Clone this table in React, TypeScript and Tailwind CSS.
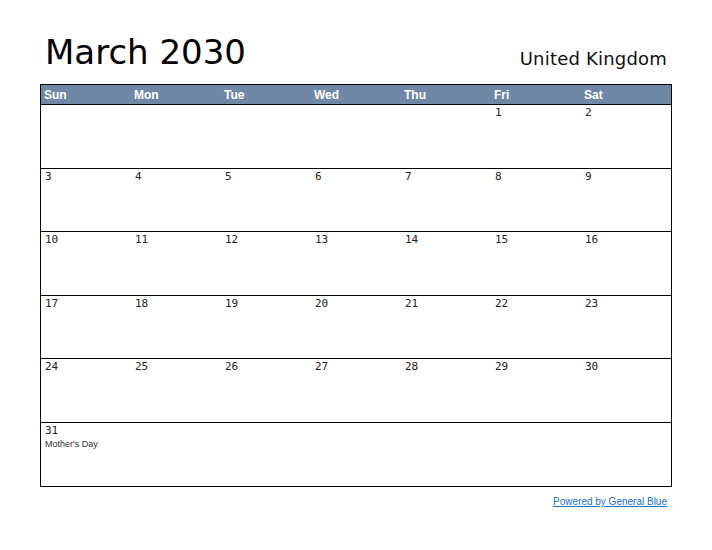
import React from 'react';

const days = ['Sun', 'Mon', 'Tue', 'Wed', 'Thu', 'Fri', 'Sat'];

interface Cell {
  day?: number;
  note?: string;
}

const weeks: { height: string; cells: Cell[] }[] = [
  { height: 'h-[63px]', cells: [{}, {}, {}, {}, {}, { day: 1 }, { day: 2 }] },
  { height: 'h-[63px]', cells: [3, 4, 5, 6, 7, 8, 9].map((d) => ({ day: d })) },
  { height: 'h-[64px]', cells: [10, 11, 12, 13, 14, 15, 16].map((d) => ({ day: d })) },
  { height: 'h-[63px]', cells: [17, 18, 19, 20, 21, 22, 23].map((d) => ({ day: d })) },
  { height: 'h-[64px]', cells: [24, 25, 26, 27, 28, 29, 30].map((d) => ({ day: d })) },
  { height: 'h-[64px]', cells: [{ day: 31, note: "Mother's Day" }, {}, {}, {}, {}, {}, {}] },
];

export default function App() {
  return (
    <div className="w-[712px] h-[550px] bg-white px-[40px] pt-[33px]">
      {/* Title */}
      <div className="flex items-end justify-between h-[45px]">
        <h1 className="text-[34px] leading-none text-black pl-[5px] font-['DejaVu_Sans',sans-serif] mb-[9px]">
          March 2030
        </h1>
        <div className="text-[18px] leading-none text-[#111] tracking-[0.2px] pr-[5px] mb-[10px] font-['DejaVu_Sans',sans-serif]">
          United Kingdom
        </div>
      </div>

      {/* Calendar */}
      <div className="mt-[6px] border border-black">
        <div className="grid grid-cols-7 h-[20px] bg-[#7088a6] border-b border-black">
          {days.map((d) => (
            <div
              key={d}
              className="pl-[3px] pt-[2px] text-[12px] leading-[16px] font-bold text-white font-['Liberation_Sans',Arial,sans-serif]"
            >
              {d}
            </div>
          ))}
        </div>
        {weeks.map((w, i) => (
          <div
            key={i}
            className={`grid grid-cols-7 ${w.height} ${i > 0 ? 'border-t border-black' : ''}`}
          >
            {w.cells.map((c, j) => (
              <div key={j} className="pl-[4px] pt-[1px]">
                {c.day !== undefined && (
                  <div className="text-[11px] leading-[14px] text-[#222] font-['DejaVu_Sans_Mono',monospace]">
                    {c.day}
                  </div>
                )}
                {c.note && (
                  <div className="text-[9px] leading-[12px] text-[#333] font-['Liberation_Sans',Arial,sans-serif]">
                    {c.note}
                  </div>
                )}
              </div>
            ))}
          </div>
        ))}
      </div>

      {/* Footer */}
      <div className="flex justify-end pr-[5px] mt-[9px]">
        <a
          href="#"
          className="text-[10px] leading-[12px] text-[#1a6fd1] underline font-['Liberation_Sans',Arial,sans-serif]"
        >
          Powered by General Blue
        </a>
      </div>
    </div>
  );
}
